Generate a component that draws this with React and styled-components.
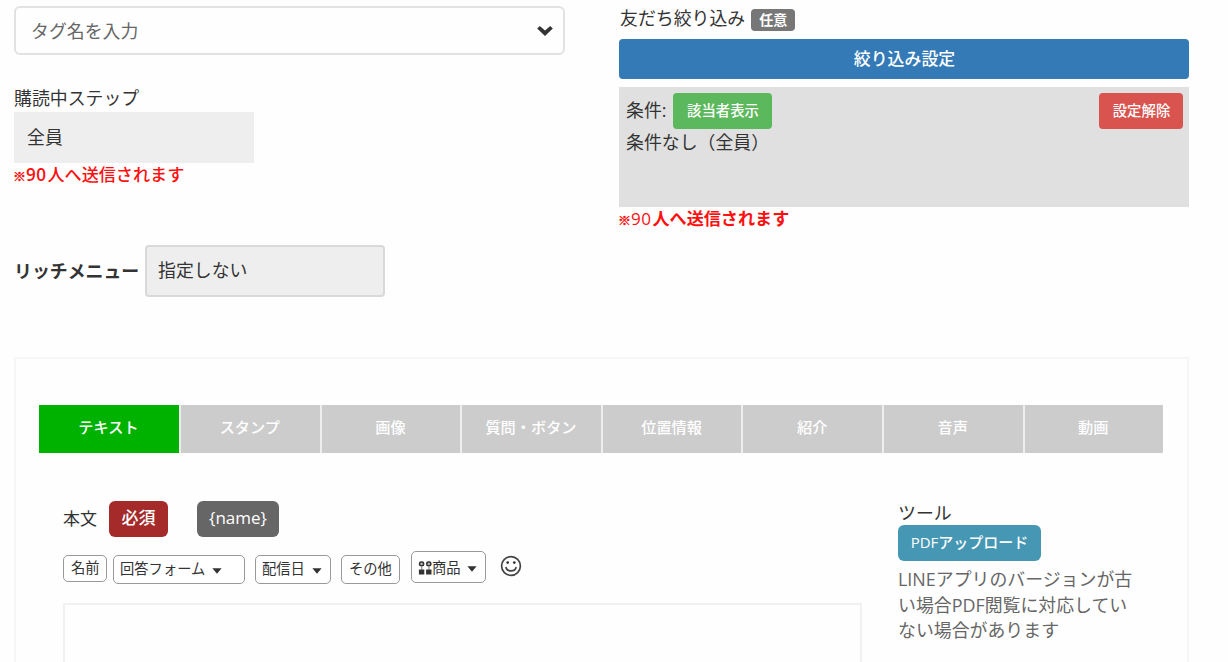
import styled, { createGlobalStyle } from "styled-components"

const TABS = ["テキスト", "スタンプ", "画像", "質問・ボタン", "位置情報", "紹介", "音声", "動画"]

const INSERTS = [
	{ label: "名前", width: 44, height: 27, gap: 6 },
	{ label: "回答フォーム", width: 132, height: 29, gap: 10, caret: 7 },
	{ label: "配信日", width: 76, height: 29, gap: 10, caret: 7 },
	{ label: "その他", width: 59, height: 29, gap: 11 },
	{ label: "商品", width: 75, height: 32, gap: 14, caret: 6, icon: true },
]

function ChevronIcon() {
	return (
		<svg width='18' height='12' viewBox='0 0 18 12'>
			<path d='M1.2 3.4 3.8 1 9 5.6 14.2 1l2.6 2.4L9 11z' fill='#333' />
		</svg>
	)
}

function CaretIcon() {
	return (
		<svg width='10' height='6' viewBox='0 0 10 6'>
			<path d='M.4.3h9.2L5 5.8z' fill='#333' />
		</svg>
	)
}

function GoodsIcon() {
	return (
		<svg width='14' height='16' viewBox='0 0 14 16'>
			<g fill='#bbb' stroke='#333' strokeWidth='1.6'>
				<rect x='1.6' y='2' width='4' height='3.8' rx='1.6' />
				<rect x='8.8' y='2' width='4' height='3.8' rx='1.6' />
			</g>
			<path d='M3 6.6h1.4v3H3zM10.2 6.6h1.4v3h-1.4z' fill='#999' />
			<path d='M.9 9.6h5.4v4.8H.9zM8.1 9.6h5.4v4.8H8.1z' fill='#333' />
		</svg>
	)
}

function SmileIcon() {
	return (
		<svg width='22' height='22' viewBox='0 0 22 22'>
			<circle cx='11' cy='11' r='9.4' fill='none' stroke='#444' strokeWidth='1.7' />
			<circle cx='7.7' cy='7.6' r='1.35' fill='#333' />
			<circle cx='14.3' cy='7.6' r='1.35' fill='#333' />
			<path d='M5.8 12c1 5.2 9.4 5.2 10.4 0' fill='none' stroke='#444' strokeWidth='1.6' />
		</svg>
	)
}

function SendCount({ weight, countWeight }) {
	return (
		<SendNote $weight={weight} $countWeight={countWeight}>
			<small>※</small>
			<b>90</b>人へ送信されます
		</SendNote>
	)
}

export default function App() {
	return (
		<Page>
			<GlobalStyle />
			<Filters>
				<Column>
					<TagSelect>
						<span>タグ名を入力</span>
						<ChevronIcon />
					</TagSelect>
					<StepLabel>購読中ステップ</StepLabel>
					<ReadonlyBox>全員</ReadonlyBox>
					<SendCount weight={500} countWeight={600} />
					<RichMenu>
						<strong>リッチメニュー</strong>
						<ReadonlyBox $bordered>指定しない</ReadonlyBox>
					</RichMenu>
				</Column>
				<FriendColumn>
					<FriendLabel>
						友だち絞り込み
						<OptionalBadge>任意</OptionalBadge>
					</FriendLabel>
					<FilterButton>絞り込み設定</FilterButton>
					<Conditions>
						<ConditionRow>
							<span>条件:</span>
							<SmallButton $color='#5cb85c' $width={99}>該当者表示</SmallButton>
							<SmallButton $color='#d9534f' $width={84} $end>設定解除</SmallButton>
						</ConditionRow>
						<p>条件なし（全員）</p>
					</Conditions>
					<SendCount weight={700} countWeight={500} />
				</FriendColumn>
			</Filters>

			<Panel>
				<TabBar>
					{TABS.map((tab, i) => (
						<Tab key={tab} $active={i === 0}>{tab}</Tab>
					))}
				</TabBar>
				<Body>
					<Editor>
						<BodyLabel>
							<span>本文</span>
							<Tag $color='#a52a2a' $width={59}>必須</Tag>
							<Tag $color='#666' $width={82} $space={29}>{"{name}"}</Tag>
						</BodyLabel>
						<InsertBar>
							{INSERTS.map((item) => (
								<InsertButton
									key={item.label}
									$width={item.width}
									$height={item.height}
									$gap={item.gap}
									$caret={item.caret}
								>
									{item.icon && <GoodsIcon />}
									<span>{item.label}</span>
									{item.caret && <CaretIcon />}
								</InsertButton>
							))}
							<Smile>
								<SmileIcon />
							</Smile>
						</InsertBar>
						<TextArea />
					</Editor>
					<Tools>
						<h4>ツール</h4>
						<UploadButton>PDFアップロード</UploadButton>
						<p>
							LINEアプリのバージョンが古
							<br />
							い場合PDF閲覧に対応してい
							<br />
							ない場合があります
						</p>
					</Tools>
				</Body>
			</Panel>
		</Page>
	)
}

const GlobalStyle = createGlobalStyle`
	* {
		box-sizing: border-box;
		margin: 0;
		padding: 0;
	}
	body {
		background: #fefefe;
		color: #333;
		font-family: "Open Sans", "Noto Sans CJK JP", sans-serif;
		font-size: 17.9px;
		line-height: 26px;
		white-space: nowrap;
		overflow: hidden;
	}
	button {
		font-family: inherit;
		white-space: nowrap;
	}
	svg {
		display: block;
		flex: none;
	}
`

const Page = styled.div`
	height: 662px;
	padding: 6px 39px 0 14px;
	display: flex;
	flex-direction: column;
	overflow: hidden;
`

const Filters = styled.div`
	height: 351px;
	flex: none;
	display: grid;
	grid-template-columns: 551px 570px;
	column-gap: 54px;
`

const Column = styled.div`
	display: flex;
	flex-direction: column;
	align-items: flex-start;
`

const TagSelect = styled.div`
	width: 100%;
	height: 49px;
	padding: 0 9px 0 15px;
	border: 2px solid #e2e2e2;
	border-radius: 6px;
	display: flex;
	align-items: center;
	justify-content: space-between;
	color: #666;
`

const StepLabel = styled.label`
	margin-top: 30px;
	height: 27px;
`

const ReadonlyBox = styled.div`
	width: 240px;
	height: ${(p) => (p.$bordered ? 52 : 51)}px;
	padding: 0 12px 2px ${(p) => (p.$bordered ? 11 : 13)}px;
	background: #eee;
	border: ${(p) => (p.$bordered ? "2px solid #d9d9d9" : "none")};
	border-radius: ${(p) => (p.$bordered ? 4 : 0)}px;
	display: flex;
	align-items: center;
`

const SendNote = styled.p`
	height: 24px;
	line-height: 24px;
	font-size: 17.1px;
	font-weight: ${(p) => p.$weight};
	color: #ff1010;

	small {
		display: inline-block;
		width: 12px;
		font-size: 13px;
		font-weight: 700;
		text-indent: -1px;
		-webkit-text-stroke: 0.4px;
	}
	b {
		display: inline-block;
		width: 21.5px;
		font-weight: ${(p) => p.$countWeight};
		letter-spacing: 0.4px;
	}
`

const RichMenu = styled.div`
	margin-top: 58px;
	display: flex;
	align-items: center;

	strong {
		width: 131px;
		padding-bottom: 1px;
	}
`

const FriendColumn = styled.div`
	display: flex;
	flex-direction: column;
`

const FriendLabel = styled.div`
	height: 33px;
	padding: 0 0 9px 1px;
	display: flex;
	align-items: center;
	gap: 6px;
`

const OptionalBadge = styled.span`
	width: 44px;
	height: 22px;
	line-height: 21px;
	margin-top: 4px;
	border-radius: 4px;
	background: #777;
	color: #fff;
	font-size: 14px;
	font-weight: 700;
	text-align: center;
`

const FilterButton = styled.button`
	height: 40px;
	padding: 0 0 3px 1px;
	border: 0;
	border-radius: 4px;
	background: #337ab7;
	color: #fff;
	font-size: 16.9px;
	font-weight: 500;
`

const Conditions = styled.div`
	height: 120px;
	margin-top: 8px;
	padding: 6px 6px 0 7px;
	background: #e0e0e0;
`

const ConditionRow = styled.div`
	height: 36px;
	display: flex;
	align-items: center;
	gap: 6px;

	span {
		width: 41px;
		padding-bottom: 2px;
	}
`

const SmallButton = styled.button`
	width: ${(p) => p.$width}px;
	height: 36px;
	padding: 0 0 3px 1px;
	margin-left: ${(p) => (p.$end ? "auto" : 0)};
	border: 0;
	border-radius: 4px;
	background: ${(p) => p.$color};
	color: #fff;
	font-size: 14.4px;
	font-weight: 500;
`

const Panel = styled.div`
	flex: 1;
	padding: 46px 24px 0 23px;
	border: 2px solid #f6f6f6;
	border-bottom: 0;
`

const TabBar = styled.div`
	display: grid;
	grid-template-columns: 140px repeat(6, 140.6px) 1fr;
	height: 48px;
`

const Tab = styled.div`
	display: flex;
	align-items: center;
	justify-content: center;
	padding: 0 1px 4px 0;
	background: ${(p) => (p.$active ? "#00b200" : "#ccc")};
	color: #fff;
	font-size: 15.2px;
	font-weight: 500;

	& + & {
		border-left: 2px solid #eee;
	}
`

const Body = styled.div`
	padding: 48px 24px 0;
	display: flex;
	gap: 36px;
`

const Editor = styled.div`
	width: 799px;
	flex: none;
`

const BodyLabel = styled.div`
	height: 36px;
	display: flex;
	align-items: center;
	font-size: 17px;

	> span:first-child {
		width: 46px;
	}
`

const Tag = styled.span`
	width: ${(p) => p.$width}px;
	height: 36px;
	line-height: 34px;
	margin-left: ${(p) => p.$space || 0}px;
	border-radius: 6px;
	background: ${(p) => p.$color};
	color: #fff;
	font-weight: 500;
	text-align: center;
`

const InsertBar = styled.div`
	height: 48px;
	padding-top: 14px;
	display: flex;
	align-items: flex-start;
`

const InsertButton = styled.button`
	width: ${(p) => p.$width}px;
	height: ${(p) => p.$height}px;
	margin-top: ${(p) => (p.$height > 30 ? 0 : 4)}px;
	margin-right: ${(p) => p.$gap}px;
	padding: 0 0 ${(p) => (p.$height > 30 ? 0 : 2)}px ${(p) => (p.$caret ? 6 : 7)}px;
	border: 1.5px solid #999;
	border-radius: 5px;
	background: #fff;
	color: #333;
	font-size: 14.3px;
	line-height: 24px;
	display: flex;
	align-items: center;

	svg:first-child {
		margin-top: 2px;
	}
	svg:first-child + span {
		margin-top: 2px;
	}
	span + svg {
		margin: 4px 0 0 ${(p) => p.$caret}px;
	}
`

const Smile = styled.div`
	margin-top: 4px;
`

const TextArea = styled.div`
	height: 80px;
	margin-top: 18px;
	border: 2px solid #f1f1f1;
`

const Tools = styled.div`
	h4 {
		height: 24px;
		line-height: 24px;
		font-weight: 400;
	}

	p {
		margin-top: 6px;
		line-height: 25.5px;
		color: #666;
	}
`

const UploadButton = styled.button`
	display: block;
	width: 143px;
	height: 36px;
	padding-bottom: 3px;
	border: 0;
	border-radius: 6px;
	background: #4697b4;
	color: #fff;
	font-size: 15px;
	font-weight: 500;
`
